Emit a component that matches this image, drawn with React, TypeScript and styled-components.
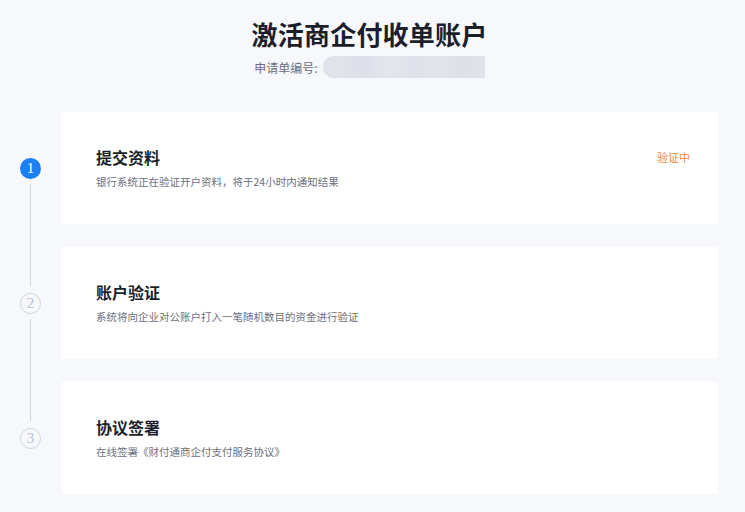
import styled, { createGlobalStyle } from 'styled-components'

const GlobalStyle = createGlobalStyle`
    html, body {
        margin: 0;
        padding: 0;
        background: #f7f8fc;
        font-family: "Noto Sans CJK SC", "Noto Sans", sans-serif;
    }
`
const Page = styled.div`
    width: 745px;
    height: 512px;
    overflow: hidden;
    background: #f7f8fc;
`
const Header = styled.header`
    display: flex;
    flex-direction: column;
    align-items: center;
    padding-top: 14px;
    padding-right: 6px;
`
const Title = styled.h1`
    margin: 0;
    font-size: 26px;
    line-height: 40px;
    font-weight: 700;
    color: #1c1f2a;
    letter-spacing: 0.2px;
`
const SubLine = styled.div`
    display: flex;
    align-items: center;
    gap: 5px;
    margin-top: 2px;
    font-size: 12px;
    color: #6b6f7b;
`
const Masked = styled.div`
    width: 162px;
    height: 22px;
    border-radius: 10px 0 0 10px;
    background: linear-gradient(90deg,
        #dfe2ea 0%, #e1e4eb 12%, #dcdfe8 24%, #e4e6ed 40%,
        #dfe2ea 55%, #e2e4eb 70%, #dedfe7 85%, #e0e3ea 100%);
`
const Steps = styled.div`
    display: flex;
    flex-direction: column;
    gap: 23px;
    margin-top: 34px;
    padding-right: 27px;
`
const Row = styled.div`
    display: flex;
    height: 112px;
`
const Rail = styled.div<{ $last?: boolean }>`
    position: relative;
    width: 62px;
    flex-shrink: 0;
    display: flex;
    align-items: center;
    justify-content: center;
    &::after {
        content: '';
        display: ${p => (p.$last ? 'none' : 'block')};
        position: absolute;
        left: 30px;
        top: 72px;
        width: 1px;
        height: 102px;
        background: #d3d6df;
    }
`
const Dot = styled.div<{ $active?: boolean }>`
    box-sizing: border-box;
    width: 21px;
    height: 21px;
    border-radius: 50%;
    margin-left: -1px;
    display: flex;
    align-items: center;
    justify-content: center;
    font-family: "Liberation Serif", serif;
    font-size: 15px;
    background: ${p => (p.$active ? '#1b7ff5' : 'transparent')};
    border: ${p => (p.$active ? 'none' : '1.5px solid #cfd3dc')};
    color: ${p => (p.$active ? '#fff' : '#bcc1cc')};
`
const Card = styled.div`
    flex: 1;
    background: #fff;
    display: flex;
    align-items: center;
    justify-content: space-between;
    padding: 0 28px 0 34px;
`
const Info = styled.div`
    display: flex;
    flex-direction: column;
`
const CardTitle = styled.div`
    font-size: 16px;
    line-height: 22px;
    font-weight: 700;
    color: #1c1f2a;
`
const Desc = styled.div`
    margin-top: 6px;
    font-size: 10.5px;
    line-height: 16px;
    color: #6b6f7b;
`
const Status = styled.div`
    align-self: flex-start;
    margin-top: 37px;
    font-size: 11px;
    color: #f7873a;
`

const steps = [
    { title: '提交资料', desc: '银行系统正在验证开户资料，将于24小时内通知结果', status: '验证中' },
    { title: '账户验证', desc: '系统将向企业对公账户打入一笔随机数目的资金进行验证' },
    { title: '协议签署', desc: '在线签署《财付通商企付支付服务协议》' },
]

const App = () => {
    return (
        <>
            <GlobalStyle />
            <Page>
                <Header>
                    <Title>激活商企付收单账户</Title>
                    <SubLine>
                        申请单编号:
                        <Masked />
                    </SubLine>
                </Header>
                <Steps>
                    {steps.map((s, i) => (
                        <Row key={s.title}>
                            <Rail $last={i === steps.length - 1}>
                                <Dot $active={i === 0}>{i + 1}</Dot>
                            </Rail>
                            <Card>
                                <Info>
                                    <CardTitle>{s.title}</CardTitle>
                                    <Desc>{s.desc}</Desc>
                                </Info>
                                {s.status && <Status>{s.status}</Status>}
                            </Card>
                        </Row>
                    ))}
                </Steps>
            </Page>
        </>
    )
}

export default App
